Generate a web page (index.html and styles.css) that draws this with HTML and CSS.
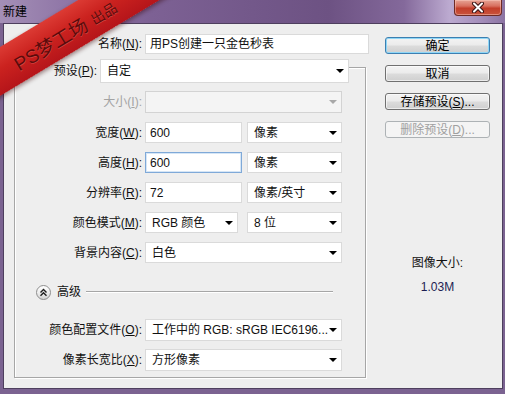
FILE: index.html
```html
<!DOCTYPE html>
<html lang="zh-CN">
<head>
  <meta charset="UTF-8" />
  <meta name="viewport" content="width=device-width, initial-scale=1.0" />
  <title>新建</title>
  <link rel="stylesheet" href="styles.css">
</head>
<body>
  <div class="window">
    <div class="titlebar">
      <span class="title">新建</span>
      <span class="close">
        <svg width="14" height="11" viewBox="0 0 14 11">
          <path d="M3 1.5 L11 9.5 M11 1.5 L3 9.5" stroke="#3b1414" stroke-width="4" stroke-linecap="round" fill="none"/>
          <path d="M3 1.5 L11 9.5 M11 1.5 L3 9.5" stroke="#fff" stroke-width="2" stroke-linecap="round" fill="none"/>
        </svg>
      </span>
    </div>

    <div class="client">
      <div class="main">
        <div class="row name-row">
          <label class="lbl">名称(<u>N</u>):</label>
          <div class="field name-field">用PS创建一只金色秒表</div>
        </div>

        <div class="group">
          <div class="row preset-row">
            <label class="lbl preset-lbl">预设(<u>P</u>):</label>
            <div class="select preset-select"><span>自定</span><i class="arrow"></i></div>
          </div>

          <div class="row size-row">
            <label class="lbl disabled">大小(<u>I</u>):</label>
            <div class="select wide off"><span></span><i class="arrow"></i></div>
          </div>

          <div class="row std">
            <label class="lbl">宽度(<u>W</u>):</label>
            <div class="field num">600</div>
            <div class="select unit"><span>像素</span><i class="arrow"></i></div>
          </div>

          <div class="row std">
            <label class="lbl">高度(<u>H</u>):</label>
            <div class="field num focus">600</div>
            <div class="select unit"><span>像素</span><i class="arrow"></i></div>
          </div>

          <div class="row std">
            <label class="lbl">分辨率(<u>R</u>):</label>
            <div class="field num">72</div>
            <div class="select unit"><span>像素/英寸</span><i class="arrow"></i></div>
          </div>

          <div class="row std">
            <label class="lbl">颜色模式(<u>M</u>):</label>
            <div class="select mode"><span>RGB 颜色</span><i class="arrow"></i></div>
            <div class="select unit"><span>8 位</span><i class="arrow"></i></div>
          </div>

          <div class="row std">
            <label class="lbl">背景内容(<u>C</u>):</label>
            <div class="select wide"><span>白色</span><i class="arrow"></i></div>
          </div>

          <div class="advanced">
            <span class="toggle">
              <svg width="9" height="9" viewBox="0 0 9 9">
                <path d="M1.5 4.5 L4.5 1.5 L7.5 4.5 M1.5 7.8 L4.5 4.8 L7.5 7.8" stroke="#1e1e1e" stroke-width="1.4" fill="none"/>
              </svg>
            </span>
            <span class="adv-text">高级</span>
            <span class="rule"></span>
          </div>

          <div class="row profile-row">
            <label class="lbl">颜色配置文件(<u>O</u>):</label>
            <div class="select wide"><span>工作中的 RGB: sRGB IEC6196...</span><i class="arrow"></i></div>
          </div>

          <div class="row aspect-row">
            <label class="lbl">像素长宽比(<u>X</u>):</label>
            <div class="select wide"><span>方形像素</span><i class="arrow"></i></div>
          </div>
        </div>
      </div>

      <div class="side">
        <button class="btn default">确定</button>
        <button class="btn">取消</button>
        <button class="btn">存储预设(<u>S</u>)...</button>
        <button class="btn" disabled>删除预设(<u>D</u>)...</button>

        <div class="size-info">
          <p class="size-label">图像大小:</p>
          <p class="size-value">1.03M</p>
        </div>
      </div>
    </div>

    <div class="ribbon"><span class="big">PS梦工场</span><span class="small">出品</span></div>
  </div>
</body>
</html>
```

FILE: styles.css
```css
body { margin: 0; font: 12px/16px "Liberation Sans", "Noto Sans CJK SC", sans-serif; color: #111; }

.window { position: relative; width: 505px; height: 394px; overflow: hidden; display: flex; flex-direction: column; background: #7b6391; }

/* title bar */
.titlebar { height: 23px; display: flex; align-items: flex-start; justify-content: space-between; background: linear-gradient(90deg, #a48fb6 0%, #9178a8 12%, #7d6194 30%, #73588a 50%, #6d5283 65%, #84699b 80%, #bcaad0 89%, #a58fbb 95%, #8c74a3 100%); }
.title { padding: 4px 0 0 3px; font-size: 12px; color: #000; }
.close { width: 46px; height: 15px; margin-right: 3px; display: flex; align-items: center; justify-content: center; border: 1px solid #6e2a24; border-top: none; border-radius: 0 0 4px 4px; background: linear-gradient(180deg, #e7a495 0%, #d8705f 40%, #c33e2a 55%, #c8533c 100%); box-shadow: inset 0 0 0 1px rgba(255,210,200,.45); }

/* client area */
.client { flex: 1; margin: 0 2px 5px 3px; display: flex; align-items: flex-start; background: #eeeeee; border: 1px solid #4e3f5e; }
.main { padding: 10px 0 0 10px; }
.side { margin-left: 16px; padding-top: 13px; width: 105px; display: flex; flex-direction: column; }

.row { display: flex; align-items: center; }
.lbl { width: 127px; margin-right: 3px; text-align: right; white-space: nowrap; }
.lbl.disabled { color: #a3a3a3; }
u { text-decoration: underline; }

.field, .select { box-sizing: border-box; height: 100%; display: flex; align-items: center; background: #fff; border: 1px solid #dadada; white-space: nowrap; overflow: hidden; }
.field { padding-left: 4px; }
.field.focus { border-color: #7fa9d8; box-shadow: inset 0 0 0 1px #d6e6f6; }
.select { justify-content: space-between; padding: 0 4px 0 6px; }
.select.off { background: #f4f4f4; border-color: #d3d3d3; }
.arrow { width: 0; height: 0; border-left: 4px solid transparent; border-right: 4px solid transparent; border-top: 4px solid #000; flex-shrink: 0; }
.select.off .arrow { border-top-color: #a8a8a8; }

.name-row { height: 20px; margin-left: 1px; }
.name-field { width: 224px; }

/* group box */
.group { box-sizing: border-box; width: 352px; margin-top: 13px; padding-bottom: 6px; border: 1px solid #a6a6a6; box-shadow: inset 1px 1px 0 #fff, 1px 1px 0 #fff; }
.preset-row { height: 24px; margin-top: -9px; }
.preset-lbl { width: 82px; margin-right: 0; padding-right: 3px; background: #eeeeee; }
.preset-select { width: 249px; }
.size-row { height: 22px; margin-top: 8px; }
.std { height: 21px; margin-top: 9px; }
.num { width: 97px; margin-right: 5px; }
.unit { width: 95px; }
.mode { width: 93px; margin-right: 9px; }
.wide { width: 197px; }

.advanced { height: 16px; margin-top: 21px; padding-left: 21px; display: flex; align-items: center; }
.toggle { box-sizing: border-box; width: 15px; height: 15px; display: flex; align-items: center; justify-content: center; border: 1px solid #8e8e8e; border-radius: 50%; background: linear-gradient(180deg, #ffffff 0%, #ececec 55%, #d4d4d4 100%); }
.adv-text { margin-left: 6px; }
.rule { width: 247px; margin-left: 5px; border-top: 1px solid #a6a6a6; border-bottom: 1px solid #fff; }

.profile-row { height: 22px; margin-top: 19px; }
.aspect-row { height: 22px; margin-top: 8px; }

/* buttons */
.btn { box-sizing: border-box; height: 17px; margin: 0 0 11px; padding: 0; font: inherit; line-height: 14px; color: #000; border: 1px solid #707070; border-radius: 3px; background: linear-gradient(180deg, #f3f3f3 0%, #ebebeb 48%, #dcdcdc 52%, #cfcfcf 100%); box-shadow: inset 0 0 0 1px rgba(255,255,255,.6); }
.btn.default { border-color: #3c7fb1; box-shadow: inset 0 0 0 1px #8fd6f6; }
.btn:disabled { color: #a0a0a0; border-color: #adb2b5; background: #f4f4f4; box-shadow: none; }

.size-info { margin-top: 106px; text-align: center; }
.size-info p { margin: 0; }
.size-label { color: #111; }
.size-value { margin-top: 8px !important; color: #1d1d52; }

/* watermark ribbon */
.ribbon { position: absolute; left: -96px; top: 12px; box-sizing: border-box; width: 320px; height: 42px; padding-top: 8px; display: flex; align-items: center; justify-content: center; gap: 6px; transform: rotate(-31deg); background: linear-gradient(180deg, #dc3b34 0%, #cb221f 45%, #b5151a 100%); box-shadow: 0 2px 4px rgba(50,0,0,.45); font-family: "Liberation Sans", "Noto Sans CJK SC", sans-serif; color: #5c0b0b; text-shadow: 0 1px 0 rgba(255,140,130,.35); }
.ribbon .big { font-size: 19px; line-height: 22px; }
.ribbon .small { font-size: 14px; line-height: 18px; }
```
